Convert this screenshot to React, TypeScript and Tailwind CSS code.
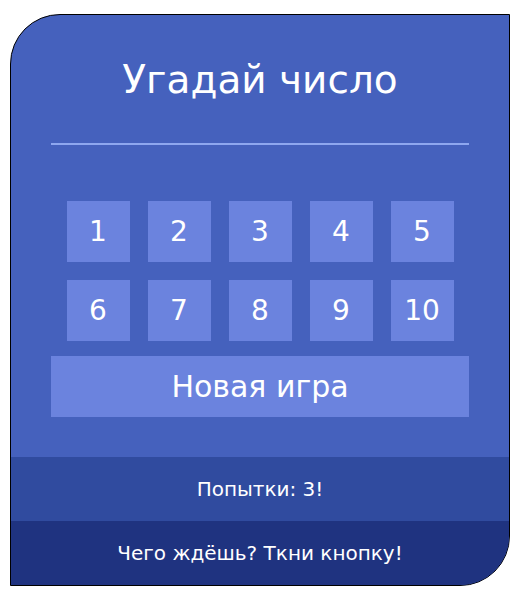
import { useState } from 'react'

const numbers = [1, 2, 3, 4, 5, 6, 7, 8, 9, 10]

export default function App() {
    const [tries] = useState<number>(3)

    return (
        <div className="pt-[14px] pl-[10px] bg-white min-h-screen" style={{ fontFamily: '"DejaVu Sans", Verdana, sans-serif' }}>
            <div className="w-[500px] border border-black rounded-tl-[50px] rounded-br-[50px] overflow-hidden bg-[#4561bd] text-white">

                <div className="px-[40px] pt-[41px] pb-[40px]">
                    <h1 className="text-center text-[39px] leading-[48px]">Угадай число</h1>
                    <div className="mt-[39px] h-[2px] bg-[#8ea7ef]" />

                    <div className="mt-[56px] grid grid-cols-[repeat(5,63px)] justify-center gap-[18px]">
                        {numbers.map((n) => (
                            <button key={n} className="h-[61px] bg-[#6b83de] text-[28px] flex items-center justify-center">
                                {n}
                            </button>
                        ))}
                    </div>

                    <button className="mt-[15px] w-full h-[61px] bg-[#6b83de] text-[30px] flex items-center justify-center">
                        Новая игра
                    </button>
                </div>

                <div className="h-[64px] bg-[#304b9f] flex items-center justify-center text-[20px]">Попытки: {tries}!</div>
                <div className="h-[64px] bg-[#1f3380] flex items-center justify-center text-[20px]">Чего ждёшь? Ткни кнопку!</div>
            </div>
        </div>
    )
}
